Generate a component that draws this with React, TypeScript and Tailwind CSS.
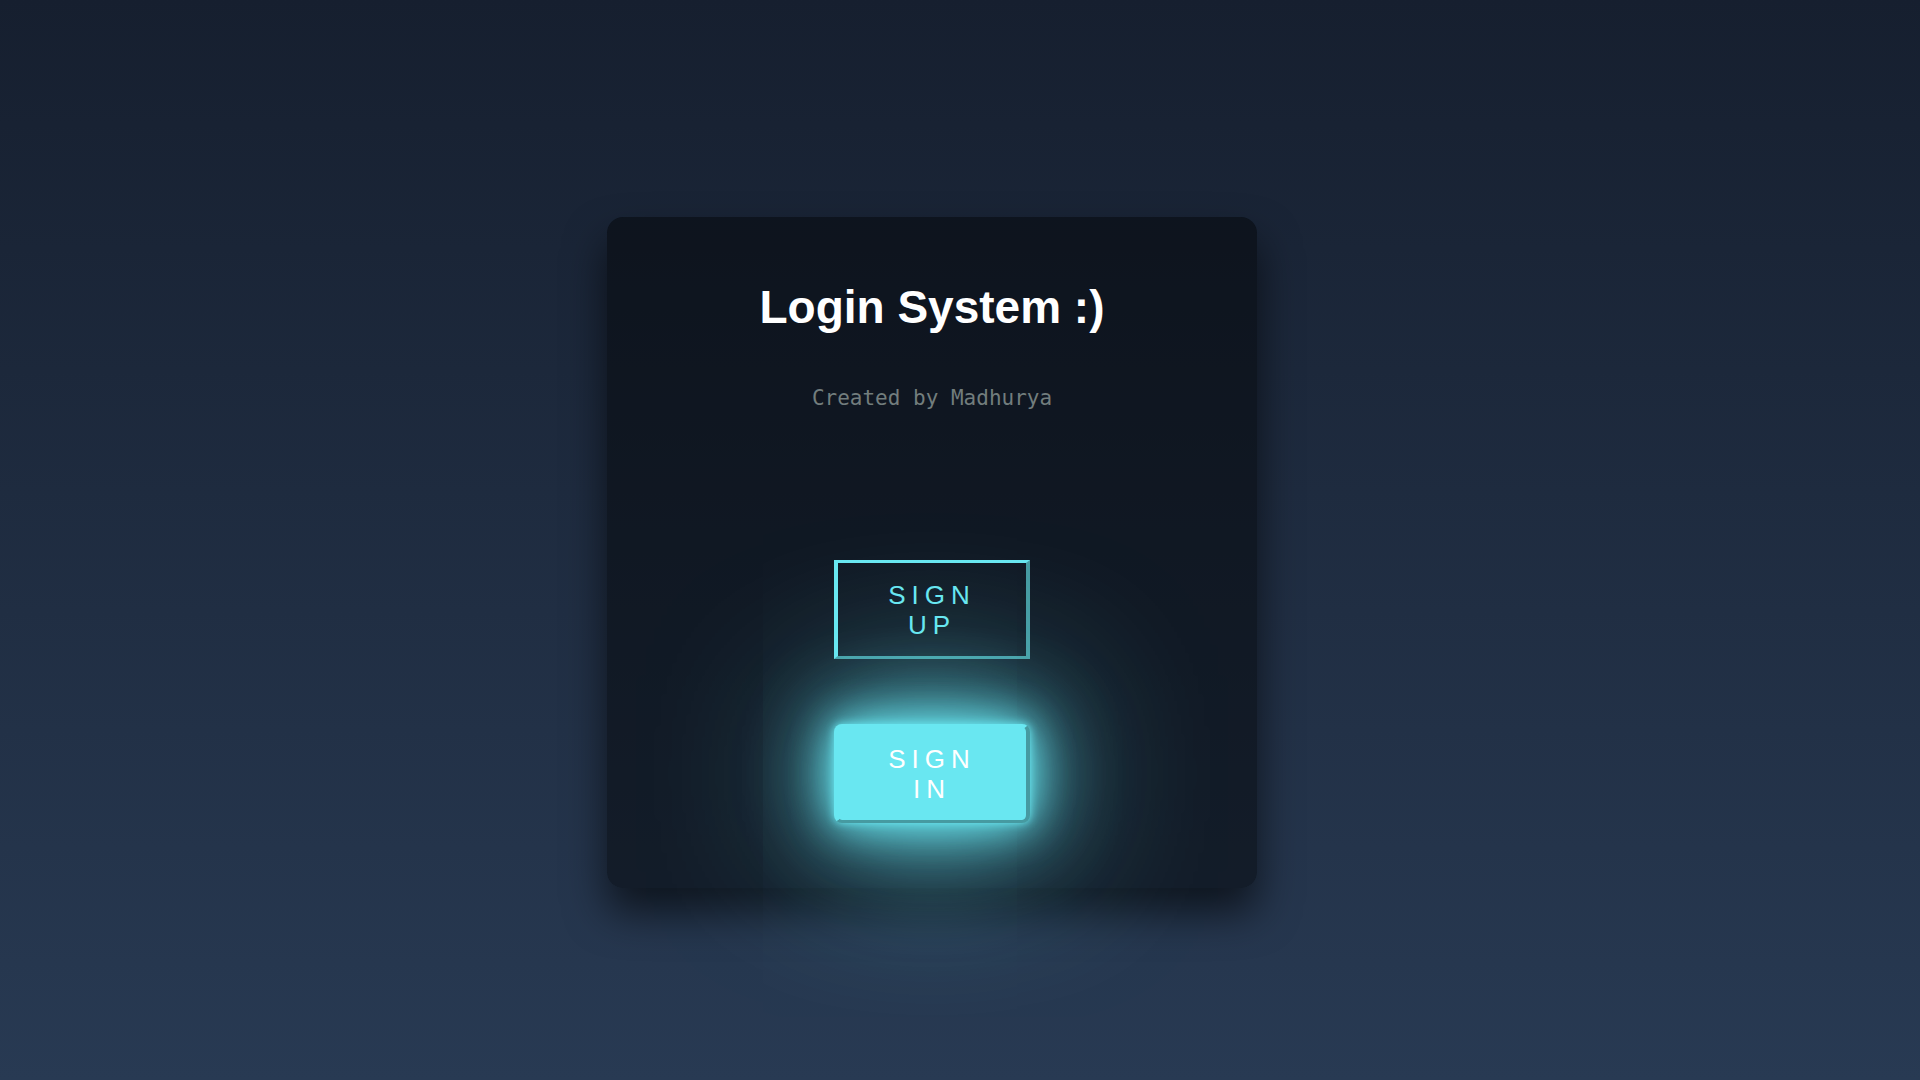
const buttonBase =
  "w-[196px] border-x-4 border-y-[3px] border-t-[#69e7f1] border-l-[#69e7f1] border-r-[#469aa1] border-b-[#469aa1] px-9 pt-[17px] pb-4 text-center text-[26px] leading-[30px] tracking-[6px] uppercase";

export default function App() {
  return (
    <main className="flex min-h-screen items-center justify-center overflow-hidden bg-linear-to-b from-[#161f2f] to-[#283a53] pt-[25px] pr-14 font-['Liberation_Sans',Arial,sans-serif]">
      <section className="flex w-full max-w-[650px] flex-col items-center rounded-2xl bg-[#020305]/50 px-16 pt-16 pb-[65px] shadow-[0_24px_41px_rgba(0,0,0,0.6)]">
        <h1 className="text-center text-[46px] leading-[52px] font-bold text-white">
          Login System :)
        </h1>
        <p className="mt-[51px] text-center font-['DejaVu_Sans_Mono',monospace] text-[21px] leading-7 text-[#727d7d]">
          Created by Madhurya
        </p>
        <div className="mt-[148px] flex flex-col items-center gap-[65px]">
          <button type="button" className={`${buttonBase} text-[#69e7f1]`}>
            Sign Up
          </button>
          <button
            type="button"
            className={`${buttonBase} rounded-lg bg-[#69e7f1] text-white shadow-[0_0_8px_#69e7f1,0_0_42px_#69e7f1,0_0_88px_#69e7f1,0_0_180px_#69e7f1]`}
          >
            Sign In
          </button>
        </div>
      </section>
    </main>
  );
}
